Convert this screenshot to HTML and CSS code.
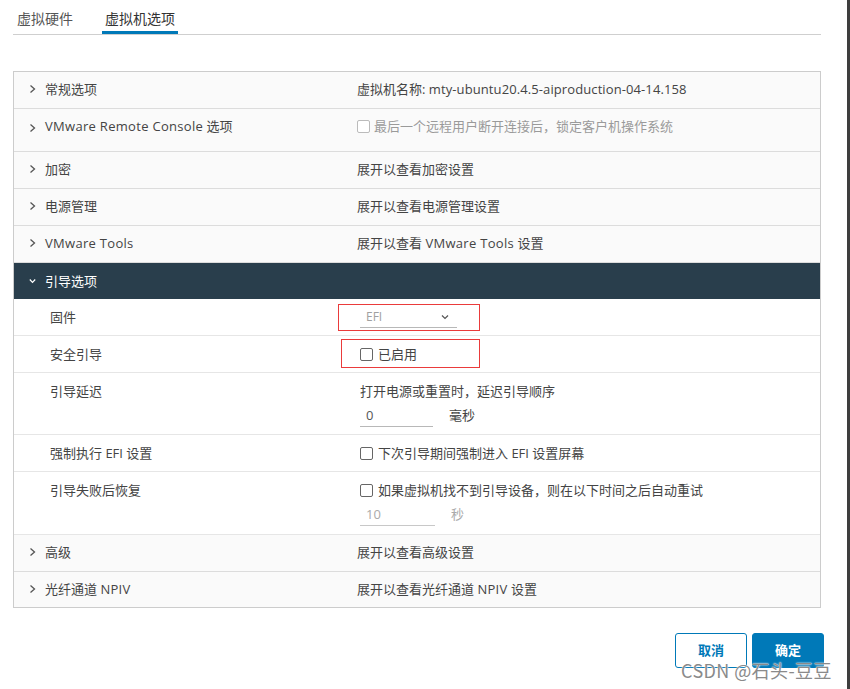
FILE: index.html
```html
<!DOCTYPE html>
<html lang="zh">
<head>
<meta charset="utf-8">
<title>虚拟机选项</title>
<link rel="stylesheet" href="styles.css">
</head>
<body>
<div class="page">
  <div class="dialog">
    <nav class="tabs">
      <span class="tab">虚拟硬件</span>
      <span class="tab active">虚拟机选项</span>
    </nav>

    <div class="stack">
      <div class="row">
        <div class="key"><svg class="chev" viewBox="0 0 7 10"><path d="M1.5 1.5 L5.5 5 L1.5 8.5"/></svg><span>常规选项</span></div>
        <div class="val">虚拟机名称: <span class="lat-tight">mty-ubuntu20.4.5-aiproduction-04-14.158</span></div>
      </div>
      <div class="row tall">
        <div class="key"><svg class="chev low" viewBox="0 0 7 10"><path d="M1.5 1.5 L5.5 5 L1.5 8.5"/></svg><span><span class="lat">VMware Remote Console</span> 选项</span></div>
        <div class="val disabled"><span class="cb light"></span>最后一个远程用户断开连接后，锁定客户机操作系统</div>
      </div>
      <div class="row">
        <div class="key"><svg class="chev" viewBox="0 0 7 10"><path d="M1.5 1.5 L5.5 5 L1.5 8.5"/></svg><span>加密</span></div>
        <div class="val">展开以查看加密设置</div>
      </div>
      <div class="row">
        <div class="key"><svg class="chev" viewBox="0 0 7 10"><path d="M1.5 1.5 L5.5 5 L1.5 8.5"/></svg><span>电源管理</span></div>
        <div class="val">展开以查看电源管理设置</div>
      </div>
      <div class="row">
        <div class="key"><svg class="chev" viewBox="0 0 7 10"><path d="M1.5 1.5 L5.5 5 L1.5 8.5"/></svg><span class="lat">VMware Tools</span></div>
        <div class="val">展开以查看 <span class="lat">VMware Tools</span> 设置</div>
      </div>

      <div class="row head">
        <div class="key"><svg class="chev down" viewBox="0 0 7 6"><path d="M0.8 1.5 L3.5 4.3 L6.2 1.5"/></svg><span>引导选项</span></div>
        <div class="val"></div>
      </div>

      <div class="row sub">
        <div class="key">固件</div>
        <div class="val">
          <span class="mark mark-fw"></span>
          <div class="select"><span>EFI</span><svg class="sel-chev" viewBox="0 0 8 6"><path d="M1 1.5 L4 4.5 L7 1.5"/></svg></div>
        </div>
      </div>
      <div class="row sub">
        <div class="key">安全引导</div>
        <div class="val">
          <span class="mark mark-sb"></span>
          <span class="check"><span class="cb"></span>已启用</span>
        </div>
      </div>
      <div class="row sub delay">
        <div class="key">引导延迟</div>
        <div class="val">
          <div>打开电源或重置时，延迟引导顺序</div>
          <div class="inline-input">
            <span class="input w73">0</span><span class="unit">毫秒</span>
          </div>
        </div>
      </div>
      <div class="row sub">
        <div class="key">强制执行 EFI 设置</div>
        <div class="val"><span class="check"><span class="cb"></span>下次引导期间强制进入 EFI 设置屏幕</span></div>
      </div>
      <div class="row sub tall2">
        <div class="key">引导失败后恢复</div>
        <div class="val">
          <div class="check"><span class="cb"></span>如果虚拟机找不到引导设备，则在以下时间之后自动重试</div>
          <div class="inline-input dis">
            <span class="input w75">10</span><span class="unit">秒</span>
          </div>
        </div>
      </div>

      <div class="row">
        <div class="key"><svg class="chev" viewBox="0 0 7 10"><path d="M1.5 1.5 L5.5 5 L1.5 8.5"/></svg><span>高级</span></div>
        <div class="val">展开以查看高级设置</div>
      </div>
      <div class="row last">
        <div class="key"><svg class="chev" viewBox="0 0 7 10"><path d="M1.5 1.5 L5.5 5 L1.5 8.5"/></svg><span>光纤通道 <span class="lat">NPIV</span></span></div>
        <div class="val">展开以查看光纤通道 <span class="lat">NPIV</span> 设置</div>
      </div>
    </div>

    <div class="footer">
      <button class="btn outline">取消</button>
      <button class="btn primary">确定</button>
    </div>
  </div>
  <div class="watermark">CSDN @石头-豆豆</div>
</div>
</body>
</html>
```

FILE: styles.css
```css
* { box-sizing: border-box; }

html, body {
  margin: 0;
  padding: 0;
  background: #fff;
}

body {
  font-family: "Open Sans", "Noto Sans CJK SC", sans-serif;
  font-size: 13px;
  color: #444;
}

.lat { letter-spacing: 0.3px; }
.lat-tight { letter-spacing: 0.1px; }

.page {
  position: relative;
  width: 850px;
  height: 689px;
  border-right: 3px solid #3e3e3e;
  overflow: hidden;
}

.dialog {
  margin-left: 13px;
  width: 808px;
}

/* tabs */
.tabs {
  display: flex;
  height: 35px;
  border-bottom: 1px solid #cfcfcf;
}

.tab {
  font-size: 14px;
  line-height: 16px;
  padding: 11px 3px 4px;
  color: #555;
  border-bottom: 3px solid transparent;
  height: 34px;
}

.tab:first-child {
  margin-left: 1px;
  margin-right: 26px;
}

.tab.active {
  color: #333;
  border-bottom-color: #0079b8;
}

/* stack view */
.stack {
  margin-top: 36px;
  border: 1px solid #cccccc;
  background: #fafafa;
}

.row {
  display: grid;
  grid-template-columns: 343px 1fr;
  border-bottom: 1px solid #dcdcdc;
  min-height: 37px;
}

.row.tall { min-height: 43px; }
.row.last { border-bottom: none; min-height: 35px; }

.key, .val {
  padding-top: 9px;
  line-height: 16px;
  position: relative;
}

.key {
  display: flex;
  align-items: flex-start;
  padding-left: 15px;
  color: #444;
}

.chev {
  width: 7px;
  height: 10px;
  margin-top: 3px;
  margin-right: 9px;
  flex: none;
  fill: none;
  stroke: #555;
  stroke-width: 1.3;
}

.chev.low { margin-top: 5px; }

.val { color: #444; }

.val.disabled { color: #9a9a9a; }

/* header row */
.row.head {
  background: #293e4c;
  border-bottom: none;
  min-height: 36px;
}

.row.head .key { color: #fff; padding-top: 10px; }

.chev.down {
  width: 7px;
  height: 6px;
  margin-top: 5px;
  margin-right: 9px;
  stroke: #fff;
  stroke-width: 1.2;
}

/* sub rows */
.row.sub {
  background: #fff;
  border-bottom-color: #e6e6e6;
}

.row.sub .key,
.row.sub .val { padding-top: 10px; }

.row.sub .key { padding-left: 36px; }
.row.sub .val { padding-left: 3px; }

.row.sub.delay { min-height: 62px; }
.row.sub.tall2 { min-height: 63px; }

/* checkbox */
.cb {
  display: inline-block;
  width: 13px;
  height: 13px;
  border: 1px solid #666;
  border-radius: 2px;
  background: #fff;
  vertical-align: -2px;
  margin-right: 5px;
}

.cb.light { border-color: #bbb; margin-right: 4px; }

.check { color: #444; }

/* select */
.select {
  width: 97px;
  display: flex;
  align-items: center;
  justify-content: space-between;
  padding: 0 8px 2px 6px;
  border-bottom: 1px solid #b8b8b8;
  color: #a0a0a0;
  font-size: 12px;
}

.sel-chev {
  width: 8px;
  height: 6px;
  fill: none;
  stroke: #555;
  stroke-width: 1.2;
}

/* inputs */
.inline-input {
  display: flex;
  align-items: flex-start;
  margin-top: 8px;
}

.input {
  display: block;
  padding: 0 0 3px 6px;
  border-bottom: 1px solid #b8b8b8;
  line-height: 16px;
  color: #555;
}

.w73 { width: 73px; }
.w75 { width: 75px; }

.unit { margin-left: 16px; color: #444; }

.inline-input.dis .input { color: #aaa; border-bottom-color: #c8c8c8; }
.inline-input.dis .unit { color: #aaa; }

/* red annotation boxes */
.mark {
  position: absolute;
  border: 1px solid #ea3b3b;
  pointer-events: none;
}

.mark-fw { left: -19px; top: 5px; width: 142px; height: 27px; }
.mark-sb { left: -16px; top: 3px; width: 139px; height: 29px; }

/* footer */
.footer {
  display: flex;
  justify-content: flex-end;
  gap: 5px;
  margin-top: 25px;
  margin-right: -3px;
}

.btn {
  width: 72px;
  height: 35px;
  border-radius: 3px;
  font-family: "Open Sans", "Noto Sans CJK SC", sans-serif;
  font-size: 13px;
  font-weight: 600;
  line-height: 15px;
  padding: 0;
}

.btn.outline {
  background: #fff;
  border: 1px solid #0079b8;
  color: #0079b8;
}

.btn.primary {
  background: #0079b8;
  border: 1px solid #0079b8;
  color: #fff;
  font-weight: 700;
}

/* watermark overlay */
.watermark {
  position: absolute;
  left: 681px;
  top: 661px;
  font-family: "Noto Sans CJK SC", sans-serif;
  font-size: 18px;
  line-height: 18px;
  letter-spacing: 0.4px;
  color: #8a8a8a;
  text-shadow: 0 0 2px #fff, 0 0 1px #fff;
  white-space: nowrap;
}
```
